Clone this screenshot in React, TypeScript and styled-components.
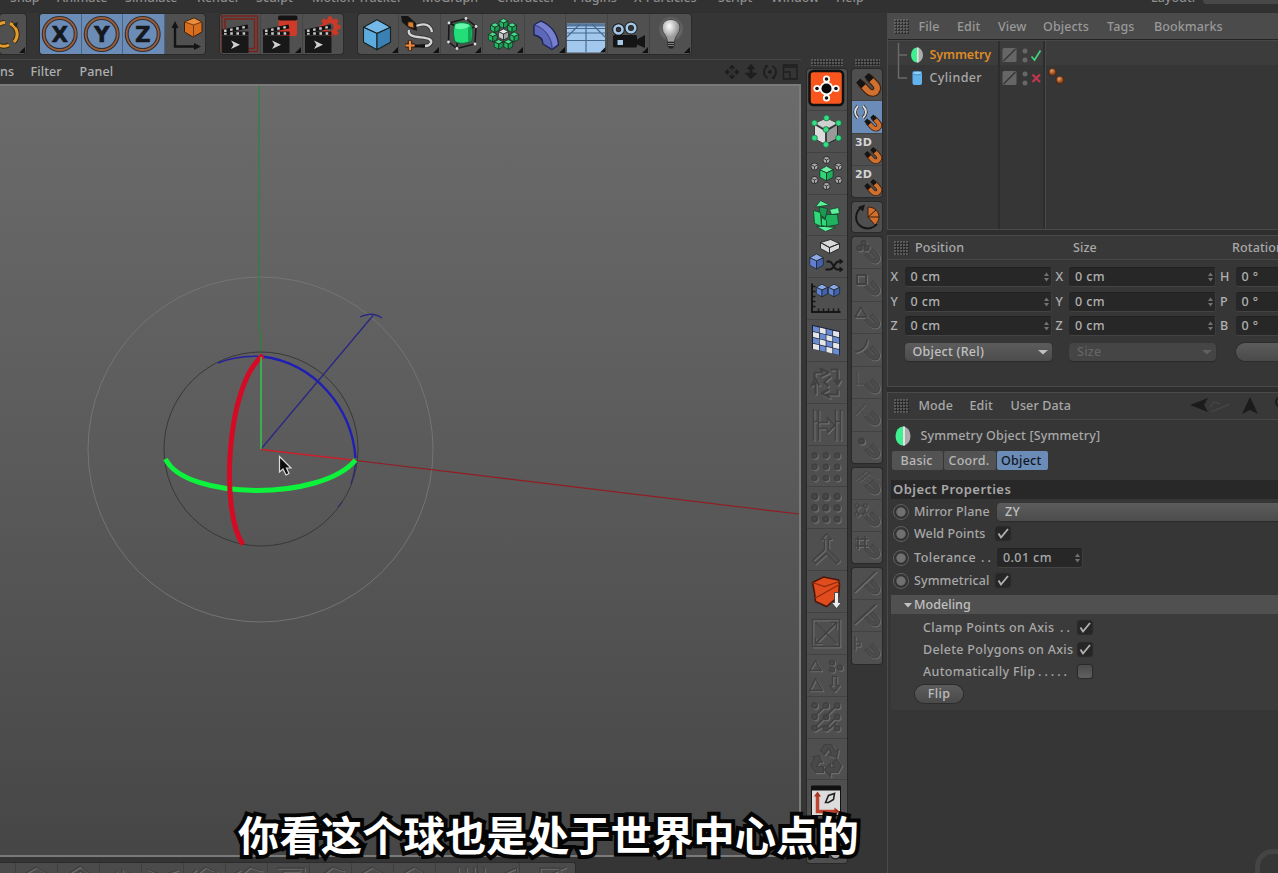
import React from "react";
import styled, { createGlobalStyle } from "styled-components";

const Global = createGlobalStyle`
  html, body { margin: 0; padding: 0; background: #353535; overflow: hidden; }
  * { box-sizing: border-box; }
  svg { display: block; flex: none; }
`;

/* ---------- shell ---------- */
const Shell = styled.div`
  position: relative;
  width: 1278px;
  height: 873px;
  overflow: hidden;
  display: flex;
  flex-direction: column;
  background: #353535;
  color: #b0b0b0;
  font-family: "Noto Sans", "Open Sans", "Noto Sans CJK SC", sans-serif;
  font-size: 12.5px;
  font-weight: 500;
  line-height: 16px;
`;
const MenuBar = styled.div`
  height: 13px;
  flex: none;
  display: flex;
  overflow: hidden;
  background: #313131;
  padding-left: 10px;
  color: #8e8e8e;
`;
const MenuItem = styled.div<{ $w: number }>`
  width: ${(p) => p.$w}px;
  flex: none;
  margin-top: -10px;
  white-space: nowrap;
`;
const LayoutSelect = styled.div`
  flex: 1;
  height: 4px;
  background: #484848;
  border-radius: 0 0 0 4px;
`;
const Body = styled.div`
  flex: 1;
  display: flex;
  min-height: 0;
`;
const LeftSide = styled.div`
  width: 887px;
  flex: none;
  display: flex;
  flex-direction: column;
`;
const Toolbar = styled.div`
  height: 46px;
  flex: none;
  display: flex;
  gap: 14.5px;
  padding-top: 1px;
`;
const ToolGroup = styled.div<{ $w: number }>`
  width: ${(p) => p.$w}px;
  height: 40px;
  display: flex;
  overflow: hidden;
  border-radius: 3px;
  background: #505050;
  box-shadow: 0 0 0 1px #2a2a2a;
`;
const Tool = styled.div<{ $on?: boolean }>`
  flex: 1;
  min-width: 0;
  background: ${(p) => (p.$on ? "#6c8cb8" : "transparent")};
  border-right: 1px solid ${(p) => (p.$on ? "#4c6488" : "#444")};
  &:last-child { border-right: 0; }
`;
const Work = styled.div`
  flex: 1;
  display: flex;
  min-height: 0;
`;
const ViewColumn = styled.div`
  width: 801px;
  flex: none;
  display: flex;
  flex-direction: column;
  border-top: 1px solid #484848;
`;
const ViewMenu = styled.div`
  height: 24px;
  flex: none;
  display: flex;
  align-items: center;
  padding-right: 2px;
  background: #343434;
`;
const ViewMenuItem = styled.div<{ $w: number }>`
  width: ${(p) => p.$w}px;
  white-space: nowrap;
  letter-spacing: 0.1px;
`;
const Grow = styled.div`flex: 1;`;
const Viewport = styled.div`
  height: 773px;
  flex: none;
  overflow: hidden;
  border: 2px solid #7a7a7a;
  border-left: 0;
  background: linear-gradient(#6b6b6b, #666 15%, #5a5a5a 50%, #464646);
`;
const BottomPalette = styled.div`
  height: 20px;
  width: 576px;
  margin-top: 5px;
  border-top: 1px solid #2b2b2b;
  border-right: 1px solid #2b2b2b;
  background: #4b4b4b;
  border-radius: 0 3px 0 0;
  overflow: hidden;
`;
const PaletteColumn = styled.div<{ $w: number; $gap: number }>`
  width: ${(p) => p.$w}px;
  margin-left: ${(p) => p.$gap}px;
  flex: none;
  display: flex;
  flex-direction: column;
  gap: 5px;
`;
const Grip = styled.div<{ $w: number; $h: number }>`
  width: ${(p) => p.$w}px;
  height: ${(p) => p.$h}px;
  flex: none;
  background-image: radial-gradient(circle at 1px 1px, #6e6e6e 0.5px, transparent 1.1px),
    radial-gradient(circle at 2px 2px, #1e1e1e 0.5px, transparent 1.2px);
  background-size: 3px 3px;
`;
const GripRow = styled.div`
  height: 5px;
  display: flex;
  justify-content: center;
`;
const Palette = styled.div<{ $h: number }>`
  height: ${(p) => p.$h}px;
  flex: none;
  display: flex;
  flex-direction: column;
  overflow: hidden;
  border-radius: 3px;
  background: #4f4f4f;
  box-shadow: 0 0 0 1px #292929;
`;
const PaletteCell = styled.div<{ $on?: boolean }>`
  flex: 1;
  min-height: 0;
  display: flex;
  background: ${(p) => (p.$on ? "#6c8cb8" : "transparent")};
  border-bottom: 1px solid #424242;
  &:last-child { border-bottom: 0; }
`;

/* ---------- right side ---------- */
const RightSide = styled.div`
  flex: 1;
  min-width: 0;
  display: flex;
  flex-direction: column;
  background: #2e2e2e;
`;
const Panel = styled.div<{ $h: number; $gap?: number }>`
  height: ${(p) => p.$h}px;
  margin-bottom: ${(p) => p.$gap ?? 0}px;
  flex: none;
  background: #363636;
  border: 1px solid #4a4a4a;
  border-right: 0;
  overflow: hidden;
  display: flex;
  flex-direction: column;
`;
const PanelHead = styled.div<{ $h: number; $raised?: boolean }>`
  height: ${(p) => p.$h}px;
  flex: none;
  display: flex;
  align-items: center;
  padding-left: 5.5px;
  background: ${(p) => (p.$raised ? "#4b4b4b" : "#383838")};
  color: ${(p) => (p.$raised ? "#999" : "#a8a8a8")};
  border-bottom: 1px solid ${(p) => (p.$raised ? "#242424" : "#484848")};
  letter-spacing: 0.1px;
`;
const Cell = styled.div<{ $w: number; $ls?: number }>`
  width: ${(p) => p.$w}px;
  flex: none;
  white-space: nowrap;
  ${(p) => (p.$ls !== undefined ? `letter-spacing: ${p.$ls}px;` : "")}
`;
const Tree = styled.div`
  flex: 1;
  display: flex;
  border-top: 1px solid #484848;
  background:
    linear-gradient(#3c3c3c, #3c3c3c) 0 0 / 100% 24px no-repeat #363636;
`;
const TreeCol = styled.div<{ $w?: number }>`
  width: ${(p) => (p.$w ? p.$w + "px" : "auto")};
  flex: ${(p) => (p.$w ? "none" : "1")};
  padding-top: 2px;
  border-right: ${(p) => (p.$w ? "2px solid #2d2d2d" : "0")};
  &:last-child { border-left: 1px solid #484848; }
`;
const TreeRow = styled.div<{ $hot?: boolean }>`
  height: 23px;
  display: flex;
  align-items: center;
  color: ${(p) => (p.$hot ? "#dd8a28" : "#a8a8a8")};
  font-weight: ${(p) => (p.$hot ? 600 : 500)};
  letter-spacing: ${(p) => (p.$hot ? -0.1 : 0.4)}px;
`;
const CoordRows = styled.div`
  padding: 7px 0 0 2.5px;
  display: flex;
  flex-direction: column;
  gap: 4px;
`;
const CoordRow = styled.div<{ $down?: boolean }>`
  height: 20.5px;
  padding-top: ${(p) => (p.$down ? 3 : 0)}px;
  display: flex;
  align-items: center;
`;
const Field = styled.div<{ $w: number; $h?: number }>`
  width: ${(p) => p.$w}px;
  height: ${(p) => p.$h ?? 20}px;
  flex: none;
  display: flex;
  align-items: center;
  justify-content: space-between;
  padding: 0 1px 0 6px;
  background: #272727;
  border-bottom: 1px solid #434343;
  border-right: 1px solid #3d3d3d;
  border-top: 1px solid #212121;
  border-radius: 3px;
  letter-spacing: 0.4px;
`;
const Dropdown = styled.div<{ $w: number; $dim?: boolean }>`
  width: ${(p) => p.$w}px;
  height: 18px;
  flex: none;
  display: flex;
  align-items: center;
  justify-content: space-between;
  padding: 0 4px 1px 8px;
  border-radius: 4px;
  background: ${(p) => (p.$dim ? "#454545" : "linear-gradient(#5c5c5c, #4c4c4c)")};
  color: ${(p) => (p.$dim ? "#646464" : "#c0c0c0")};
  box-shadow: 0 1px 1px #2a2a2a;
  letter-spacing: 0.25px;
`;
const Spacer = styled.div<{ $w: number }>`
  width: ${(p) => p.$w}px;
  flex: none;
`;
const Pill = styled.div<{ $w: number; $h: number }>`
  width: ${(p) => p.$w}px;
  height: ${(p) => p.$h}px;
  flex: none;
  display: flex;
  align-items: center;
  justify-content: center;
  border-radius: 10px;
  background: linear-gradient(#5c5c5c, #4a4a4a);
  color: #bdbdbd;
  box-shadow: 0 0 0 1px #2c2c2c;
  letter-spacing: 0.4px;
`;
const ObjectTitle = styled.div`
  height: 31px;
  flex: none;
  display: flex;
  align-items: center;
  padding-left: 6px;
  color: #a8a8a8;
  letter-spacing: 0.15px;
`;
const Tabs = styled.div`
  height: 20px;
  flex: none;
  display: flex;
  gap: 1px;
  padding-left: 4px;
`;
const Tab = styled.div<{ $on?: boolean }>`
  width: 51.3px;
  height: 19px;
  display: flex;
  align-items: center;
  justify-content: center;
  padding-right: 2px;
  border-radius: 2px;
  background: ${(p) => (p.$on ? "#6c8cb8" : "#535353")};
  color: ${(p) => (p.$on ? "#11161f" : "#b8b8b8")};
  letter-spacing: 0.25px;
`;
const SectionTitle = styled.div`
  height: 19px;
  margin: 9px 0 0 3px;
  padding: 0 0 1px 2px;
  flex: none;
  display: flex;
  align-items: center;
  background: #282828;
  color: #a8a8a8;
  font-size: 13px;
  font-weight: 600;
  letter-spacing: 0.45px;
`;
const PropRow = styled.div<{ $h: number; $indent?: boolean }>`
  height: ${(p) => p.$h}px;
  flex: none;
  display: flex;
  align-items: center;
  padding-left: ${(p) => (p.$indent ? 35 : 5)}px;
  color: #a8a8a8;
  letter-spacing: ${(p) => (p.$indent ? 0.32 : 0.1)}px;
`;
const Fold = styled.div`
  height: 19px;
  margin: 5px 0 0 3px;
  flex: none;
  display: flex;
  align-items: center;
  padding-left: 12px;
  background: #505050;
  color: #c0c0c0;
  letter-spacing: 0.05px;
`;
const FoldBody = styled.div`
  margin-left: 3px;
  padding: 3px 0 0 0;
  height: 96px;
  flex: none;
  background: #3b3b3b;
  & > * { margin-left: -3px; }
`;
const Radio = styled.div`
  width: 16px;
  height: 16px;
  margin-right: 5px;
  flex: none;
  border-radius: 50%;
  border: 1.5px solid #606060;
  background: radial-gradient(circle, #707070 0 4px, #333 5.2px);
`;
const CheckBox = styled.div<{ $on?: boolean }>`
  width: 13.5px;
  height: 13.5px;
  margin-bottom: 1.5px;
  flex: none;
  border-radius: 3px;
  background: ${(p) => (p.$on ? "#262626" : "linear-gradient(#4b4b4b, #606060)")};
  box-shadow: 0 0 1px 0.5px #2a2a2a;
`;
const Subtitle = styled.div`
  position: absolute;
  left: 238px;
  top: 802.5px;
  white-space: nowrap;
  font: 700 41.4px/60px "Noto Sans CJK SC", sans-serif;
  color: #fff;
  -webkit-text-stroke: 8px #050505;
  paint-order: stroke fill;
`;
const CornerMark = styled.div`
  position: absolute;
  left: 1255px;
  top: 849px;
  width: 46px;
  height: 46px;
  border: 5px solid #444;
  border-radius: 18px;
`;

/* ---------- icon helpers ---------- */
function Cube({ x, y, r, c }: { x: number; y: number; r: number; c: [string, string, string] }) {
  const h = r * 0.5, w = r * 0.9;
  return (
    <g stroke="#15221f" strokeWidth={r > 8 ? 1.1 : 0.7} strokeLinejoin="round">
      <path d={`M${x} ${y - r}L${x + w} ${y - h}L${x} ${y - r * 0.08}L${x - w} ${y - h}Z`} fill={c[0]} />
      <path d={`M${x - w} ${y - h}L${x} ${y - r * 0.08}V${y + r}L${x - w} ${y + h}Z`} fill={c[1]} />
      <path d={`M${x + w} ${y - h}L${x} ${y - r * 0.08}V${y + r}L${x + w} ${y + h}Z`} fill={c[2]} />
    </g>
  );
}
const GREEN: [string, string, string] = ["#6ff0a4", "#2fd878", "#1fae5c"];
const BLUE: [string, string, string] = ["#8fa9e6", "#6280cf", "#4560ad"];
const WHITE: [string, string, string] = ["#e8e8e8", "#c8c8c8", "#a0a0a0"];

/* engraved look of a disabled command */
function Emboss({ d, w = 1.5, fill }: { d: string; w?: number; fill?: boolean }) {
  return (
    <g strokeWidth={w} strokeLinejoin="round" fill="none">
      <path d={d} stroke="#6c6c6c" transform="translate(1.2 1.2)" />
      <path d={d} stroke="#404040" fill={fill ? "#494949" : "none"} />
    </g>
  );
}
const Corner = () => <path d="M40 33v6h-6z" fill="#111" />;

function Ring({ label }: { label: string }) {
  return (
    <svg width="40" height="40" viewBox="0 0 40 40">
      <circle cx="19.7" cy="20" r="16" fill="none" stroke="#303030" strokeWidth="4" />
      <circle cx="19.7" cy="20" r="16" fill="none" stroke="#9c5d3a" strokeWidth="1.8" />
      <text x="19.7" y="27.800" textAnchor="middle" fontFamily="DejaVu Sans" fontWeight="700" fontSize="21.500" fill="#15181d" stroke="#15181d" strokeWidth=".5">{label}</text>
    </svg>
  );
}
function Clapper() {
  return (
    <g>
      <rect x="2" y="22" width="26.500" height="17" fill="#181818" />
      <path d="M2 19.500h26.500" stroke="#131313" strokeWidth="4" />
      <path d="M4 19.500h24" stroke="#c8c8c8" strokeWidth="2.400" strokeDasharray="2.600 3.600" />
      <path d="M2 17.500L28 12.500" stroke="#131313" strokeWidth="4" />
      <path d="M4 17L28 12.500" stroke="#c8c8c8" strokeWidth="2.400" strokeDasharray="2.600 3.600" />
      <path d="M11 26.500L20 30.800L11 35L13.500 30.800Z" fill="#d0d0d0" />
    </g>
  );
}
const gear = Array.from({ length: 8 }, (_, i) => i * 45);
const petals = Array.from({ length: 7 }, (_, i) => {
  const a = (i * 2 * Math.PI) / 7 - Math.PI / 2;
  return [20.5 + 11 * Math.cos(a), 20.5 + 11 * Math.sin(a)];
});

const primitives = [
  <svg key="cube" width="41" height="40"><Cube x={19} y={20.7} r={15} c={["#74b8e8", "#5cacdf", "#3a80b5"]} /><Corner /></svg>,
  <svg key="spline" width="41" height="40">
    <path d="M17 12C27 8 32 12 33 18M10 16C7 27 35 20 32 29C31 32 27 32 22 32" fill="none" stroke="#333" strokeWidth="4" />
    <path d="M17 12C27 8 32 12 33 18M10 16C7 27 35 20 32 29C31 31 29 32 26 32" fill="none" stroke="#d2d2d2" strokeWidth="2.400" />
    <path d="M16 32h10" stroke="#111" strokeWidth="3" />
    <path d="M2 2L9 2L17 9L18 17L10 14L3 8Z" fill="#151515" />
    <path d="M9 8L14 8L15 14L9 12.500Z" fill="#d9822f" stroke="#4a2a12" strokeWidth=".8" />
    <path d="M11 26.500v10M6 31.500h10" stroke="#3a2313" strokeWidth="4.400" /><path d="M11 27v9M6.500 31.500h9" stroke="#ee8b3e" strokeWidth="2.200" /><Corner />
  </svg>,
  <svg key="subdiv" width="41" height="40">
    <path d="M8 9L25 4.500L35 12.500L34 30L16 34.500L7.500 28ZM8 9L17 13M35 12.500L30 14M16 34.500V29" fill="none" stroke="#161616" strokeWidth="1.500" />
    <path d="M14 10C18 8 25 8 29 10.500C32 14 32 23 30 27C25 30 18 30 14 27.500C12 22 12 14 14 10Z" fill="#22dd78" stroke="#0c6b36" />
    <path d="M14.500 10.500C18 9 24 9 28 11C27 15 18 16 14 14Z" fill="#66f5a9" /><path d="M27 14L30.500 12V26.500L27 28Z" fill="#13a355" />
    {[[8, 9], [25, 4.5], [35, 12.5], [34, 30], [16, 34.5], [7.5, 28]].map(([x, y]) => <circle key={x} cx={x} cy={y} r="1.400" fill="#ddd" />)}<Corner />
  </svg>,
  <svg key="array" width="41" height="40">
    {petals.map(([x, y], i) => <g key={i}><circle cx={x} cy={y} r="4.600" fill="#158946" /><Cube x={x} y={y} r={4.9} c={["#4fd98a", "#26b763", "#1d9a51"]} /></g>)}
    <Cube x={20.5} y={20.5} r={5.6} c={WHITE} /><Corner />
  </svg>,
  <svg key="bend" width="41" height="40">
    <path d="M9 11L16 7C26 11 33 20 33.500 31L27 35.500L18 30C18 25 14 22 9 21Z" fill="#5e68b8" stroke="#1b2152" strokeWidth="1.300" />
    <path d="M10.500 10.500L16 8C25 12 32 20 32.500 30L28 33C27 23 20 14 10.500 10.500Z" fill="#7680cf" /><path d="M9 11C20 14 27 24 27 35" fill="none" stroke="#39428c" strokeWidth="1" /><Corner />
  </svg>,
  <svg key="floor" width="41" height="40">
    <rect x="1" y="9.500" width="38" height="29" fill="#a3c8ee" /><rect x="1" y="9.500" width="38" height="3" fill="#55779c" />
    <path d="M1 14.500H39M1 19H39M1 26.500H39M20 10V38M14 10L1 23M26 10L39 23" stroke="#49698b" strokeWidth="1.200" />
    <path d="M34 38.500L39.500 33V38.500Z" fill="#111" />
  </svg>,
  <svg key="camera" width="41" height="40">
    <rect x="5" y="21" width="24" height="12.500" rx="1.500" fill="#151515" /><path d="M28 26L37 21V34L28 30Z" fill="#151515" />
    <circle cx="10.500" cy="15.500" r="4.200" fill="#333" stroke="#151515" strokeWidth="4" /><circle cx="10.500" cy="15.500" r="4" fill="none" stroke="#a3c8e8" strokeWidth="2.600" />
    <circle cx="23" cy="14" r="4.500" fill="#333" stroke="#151515" strokeWidth="4" /><circle cx="23" cy="14" r="4.300" fill="none" stroke="#a3c8e8" strokeWidth="2.600" />
    <rect x="9.500" y="26" width="5.500" height="5" fill="#a3c8e8" /><Corner />
  </svg>,
  <svg key="light" width="41" height="40">
    <defs>
      <radialGradient id="bulb" cx=".4" cy=".3"><stop offset="0" stopColor="#fff" /><stop offset="1" stopColor="#9a9a9a" /></radialGradient>
      <radialGradient id="glow"><stop offset=".6" stopColor="#777" /><stop offset="1" stopColor="#505050" /></radialGradient>
    </defs>
    <circle cx="21" cy="15" r="13" fill="url(#glow)" /><path d="M21 5.500C14 5.500 11 11 12.500 16C13.500 20 17 22 17.500 28H24.500C25 22 28.500 20 29.500 16C31 11 28 5.500 21 5.500Z" fill="url(#bulb)" stroke="#333" strokeWidth=".8" />
    <path d="M17.500 28H24.500V32L22.500 34.500H19.500L17.500 32Z" fill="#222" /><path d="M18 29.500h6M18 31.500h6" stroke="#999" strokeWidth=".8" /><Corner />
  </svg>,
];

/* ---------- side palettes ---------- */
const dots = (x0: number, y0: number, s: number, n: number, r: number) => {
  let d = "";
  for (let i = 0; i < n; i++) for (let j = 0; j < n; j++) d += `M${x0 + i * s - r} ${y0 + j * s}a${r} ${r} 0 1 0 ${2 * r} 0a${r} ${r} 0 1 0 ${-2 * r} 0`;
  return d;
};
const checker: [number, number][] = [];
for (let i = 0; i < 4; i++) for (let j = 0; j < 4; j++) checker.push([i, j]);

const moduleIcons = [
  <g key="0"><rect x="3" y="2.500" width="33.500" height="34" rx="4" fill="#f8561c" stroke="#111" strokeWidth="2.500" />
    <path d="M20 9V31M9 20H31" stroke="#fff" strokeWidth="4" /><circle cx="20" cy="20" r="6.800" fill="#fff" />
    {[[20, 10.5], [20, 29.5], [10.5, 20], [29.5, 20]].map(([x, y]) => <g key={`${x}-${y}`}><circle cx={x} cy={y} r="3.600" fill="#fff" /><circle cx={x} cy={y} r="1.800" fill="#111" /></g>)}
    <circle cx="20" cy="20" r="5" fill="#050505" /></g>,
  <g key="1"><path d="M20 8.500L31 13V28L19.500 34L8.500 28V13Z" fill="#999" stroke="#222" /><path d="M8.500 13L19.500 19V34L8.500 28Z" fill="#dcdcdc" /><path d="M20 8L31 13L19.500 18L8.500 13Z" fill="#d0d0d0" /><path d="M19 20L9 14M20 20L30 14M19.500 20V34" stroke="#333" strokeWidth="1.800" />
    {[[20, 7.5], [8, 12.5], [32, 12.5], [19.5, 19], [8, 27.5], [32, 27.5], [19.5, 34]].map(([x, y], i) => <circle key={i} cx={x} cy={y} r="2.900" fill="#35dc84" stroke="#1c5f3d" strokeWidth=".7" />)}</g>,
  <g key="2"><Cube x={20} y={21} r={7.4} c={GREEN} />
    {[[20, 7.5], [8, 14], [32, 14], [8, 27.5], [32, 27.5], [20, 33.5]].map(([x, y], i) => <g key={i}><circle cx={x} cy={y} r="3.800" fill="#2b2b2b" /><circle cx={x} cy={y} r="3" fill="#a8a8a8" /><path d={`M${x - 2.4} ${y - 1.2}L${x} ${y}L${x + 2.4} ${y - 1.2}M${x} ${y}V${y + 3}`} fill="none" stroke="#333" strokeWidth=".9" /></g>)}</g>,
  <g key="3" fill="#2fd878" stroke="#0e4526" strokeWidth=".8"><path d="M14 6L23 10.500L9 12.500Z" fill="#5df09a" /><path d="M13 12.500L21 14L19 24L13 20Z" fill="#1a9a50" /><path d="M23 15L32 13L33 19L25 20Z" fill="#5df09a" /><path d="M7 16L14 18L15 32L8 29Z" /><path d="M20 20L31 20L32 30L21 32L18 27Z" fill="#20b35f" /><path d="M10 32L18 32L29 33L19 37Z" fill="#5df09a" /><path d="M15 23L20 26L20 32L15 31Z" /></g>,
  <g key="4"><path d="M14 7L24 4L33 8L23 12ZM14 7L23 12V18L14 13ZM33 8L23 12V18L33 13Z" fill="#d8d8d8" stroke="#222" strokeWidth=".9" /><Cube x={10} y={26} r={7.500} c={BLUE} />
    <path d="M19 34H23C28 34 28 26 32 26H35M20 26H23C27 27 27 34 31 34H35" fill="none" stroke="#161616" strokeWidth="2" /><path d="M33 23L37 26L33 29ZM33 31L37 34L33 37Z" fill="#161616" /></g>,
  <g key="5"><path d="M5.500 6V34.500H34" fill="none" stroke="#161616" strokeWidth="2" /><path d="M5.500 9H9M5.500 14H9M5.500 19H9M5.500 24H9M5.500 29H9M12 34V31M17 34V31M22 34V31M27 34V31M32 34V31" stroke="#161616" strokeWidth="1.500" /><Cube x={15.500} y={13} r={6.300} c={BLUE} /><Cube x={27.500} y={13} r={6.300} c={BLUE} /></g>,
  <g key="6" transform="translate(6.500 6.500) skewY(13)"><rect width="28" height="24" fill="#18203a" x="-1" y="-1" />{checker.map(([i, j]) => <rect key={`${i}${j}`} x={i * 6.7} y={j * 5.9} width="6" height="5.200" fill={(i + j) % 2 ? "#e6e6e6" : "#6b8bd0"} />)}</g>,
  <g key="7"><Emboss d="M8 11H16L14 7L22 11L14 15M8 11V18M24 8H31V22M28 18L31 23L34 18M31 28V33H20L23 36L15 32L22 28M9 33V21L5 24L9 17L13 24M17 20L22 25M24 15L18 20" w={2.200} /></g>,
  <g key="8"><Emboss d="M7 6V37M12 6V37M29 6V37M34 6V37M7 18H12M29 18H34M12 19H21V14L28 22L21 29V25H12Z" w={1.600} /></g>,
  <g key="9"><Emboss d={dots(8, 10, 11.3, 3, 2.4)} fill w={1.600} /></g>,
  <g key="10"><Emboss d={dots(8, 10, 11.3, 3, 2.6)} fill w={2.200} /></g>,
  <g key="11"><Emboss d="M18 21V11H15L20 5L25 11H22V21L33 32L30 35L20 25L9 35L6 32Z" w={1.200} /></g>,
  <g key="12"><path d="M6 12L17 6.500L32 9.500L33 14L32 26L20 36L9 31L8 22Z" fill="#e04c1d" stroke="#4b1708" strokeWidth="1.600" /><path d="M6 12L18 16L33 11M33 14L8 28" stroke="#8f2a0d" fill="none" strokeWidth="1.300" /><path d="M28 22H32V32H35L30 38L25 32H28Z" fill="#eee" stroke="#333" strokeWidth=".8" /></g>,
  <g key="13"><Emboss d="M6 7H33V34H6ZM9 10L30 31M30 10L9 31M9 25V31H15M24 10H30V16" w={1.500} /></g>,
  <g key="14"><Emboss d="M9 6L15 16H3ZM9 24L16 36H3ZM26 22V31H23L28 37L33 31H30V22Z" w={1.300} /><Emboss d="M23 8a2.500 2.500 0 1 0 5 0a2.500 2.500 0 1 0 -5 0M31 13a2.500 2.500 0 1 0 5 0a2.500 2.500 0 1 0 -5 0M23 15a2.500 2.500 0 1 0 5 0a2.500 2.500 0 1 0 -5 0" w={1.200} fill /></g>,
  <g key="15"><Emboss d={dots(8, 9, 11.3, 3, 2.6) + "M10 18L17 11M10 29L28 11M21 29L28 22M11 33L17 29M22 33L30 26"} w={1.500} fill /></g>,
  <g key="16"><Emboss d="M14 12L18 6H25L29 13L32 11L30 19L22 17L25 15L22 10L18 16ZM6 18L13 17L16 24L13 23L10 28H17V34H9L4 27L8 20ZM30 20L35 27L31 34H24V38L18 31L24 25V29H28L26 24Z" w={1.200} fill /></g>,
  <g key="17"><rect x="5" y="7" width="29" height="29" fill="#dcdcdc" stroke="#111" strokeWidth="1" /><rect x="5" y="6" width="29" height="5" fill="#111" /><path d="M11 15V32H31" fill="none" stroke="#bf4430" strokeWidth="3.500" /><path d="M7.500 17L11 12L14.500 17ZM28 28L33 32L28 35Z" fill="#a8351f" /><path d="M19 23L22 16L28 14L27 20L22 23Z" fill="none" stroke="#222" strokeWidth="1.600" /></g>,
  <g key="18"><circle cx="29" cy="32" r="5.500" fill="#a5a5a5" stroke="#222" strokeWidth="1.500" /></g>,
];

const MAGNET_OUTLINE = "M-8 -1L-2 5.500C2 9.500 7 8.500 8.500 5.500C10.500 2 8.500 -2 6 -4L1.500 -8.500L-2 -5L4 1C6 4 3.500 5 1 3L-5 -3Z";
function Magnet({ x, y, s = 1, off }: { x: number; y: number; s?: number; off?: boolean }) {
  const d = "M-7 -2L-1 4.500C1.500 7 5 6.500 6 4.500C7.500 2.500 6.500 0 4.500 -2L-.5 -7";
  return (
    <g transform={`translate(${x} ${y}) scale(${s})`} fill="none">
      {off ? (
        <>
          <path d={MAGNET_OUTLINE} stroke="#6b6b6b" strokeWidth="1.500" transform="translate(1.200 1.200)" />
          <path d={MAGNET_OUTLINE} stroke="#454545" fill="#4c4c4c" strokeWidth="1.300" />
        </>
      ) : (
        <>
          <path d={d} stroke="#40220f" strokeWidth="6.500" /><path d={d} stroke="#d0702f" strokeWidth="4.600" />
          <path d="M-9 -4L-4.500 .5M-2 -8.800L2 -4.500" stroke="#141414" strokeWidth="5" />
        </>
      )}
    </g>
  );
}
const snapGroups: { h: number; items: { on?: boolean; art: React.ReactNode }[] }[] = [
  { h: 128, items: [
    { art: <Magnet x={17} y={16.5} s={1.2} /> },
    { on: true, art: <><path d="M6 5C2 9 2 13 6 17M11 5C15 9 15 13 11 17" fill="none" stroke="#333" strokeWidth="3.400" /><path d="M6 5C2 9 2 13 6 17M11 5C15 9 15 13 11 17" fill="none" stroke="#dcdcdc" strokeWidth="1.800" /><Magnet x={21.500} y={22.500} s={0.86} /></> },
    { art: <><text x="3" y="12" fontFamily="DejaVu Sans" fontWeight="700" fontSize="11" fill="#d4d4d4">3D</text><Magnet x={21.500} y={22} s={0.86} /></> },
    { art: <><text x="3" y="12" fontFamily="DejaVu Sans" fontWeight="700" fontSize="11" fill="#d4d4d4">2D</text><Magnet x={21.500} y={22} s={0.86} /></> },
  ] },
  { h: 30, items: [{ art: <><path d="M10 5C2 10 2 22 11 25.500C16 27.500 22 26 25 22" fill="none" stroke="#161616" strokeWidth="2" /><path d="M6 5L13 2.500L11 9.500Z" fill="#161616" /><path d="M16 15V5C22 5 27 9 27 15C27 18 25 21 23 23Z" fill="#d0702f" stroke="#3b1d0b" /><path d="M16 15L24 8M16 15H27" stroke="#3b1d0b" /></> }] },
  { h: 226, items: [
    { art: <Emboss d={"M5 11a2.500 2.500 0 1 0 5 0a2.500 2.500 0 1 0 -5 0M9 6a2.500 2.500 0 1 0 5 0a2.500 2.500 0 1 0 -5 0M12 11a2.500 2.500 0 1 0 5 0a2.500 2.500 0 1 0 -5 0"} fill /> },
    { art: <Emboss d="M5 6H14V15H5Z" w={2} /> },
    { art: <Emboss d="M9 5L15 15H3Z" /> },
    { art: <Emboss d="M3 18C10 17 15 12 15 5" w={1.6} /> },
    { art: <Emboss d="M5 4V18M3 17H14" w={0.600} /> },
    { art: <Emboss d="M3 5L13 16M13 5L3 16" w={0.800} /> },
    { art: <Emboss d="M7 9a2.500 2.500 0 1 0 5 0a2.500 2.500 0 1 0 -5 0" w={2} fill /> },
  ] },
  { h: 95, items: [
    { art: <Emboss d="M3 12L14 3L27 11M7 9L18 16M10 6L22 14M6 14L18 5" w={0.6} /> },
    { art: <Emboss d={dots(5, 6, 8, 2, 2.2) + "M5 6H13V14H5Z"} w={1} /> },
    { art: <Emboss d="M3 7H16M3 14H16M6 4V17M13 4V17" w={1.600} /> },
  ] },
  { h: 95.5, items: [
    { art: <Emboss d="M2 24L24 3" w={1.7} /> },
    { art: <Emboss d="M2 24L24 4" w={1.7} /> },
    { art: <Emboss d="M3 4V18M8 14V10H4M4 14H8" w={1.200} /> },
  ] },
];

const menuItems: [string, number][] = [
  ["Snap", 47], ["Animate", 68], ["Simulate", 72], ["Render", 59], ["Sculpt", 56], ["Motion Tracker", 110], ["MoGraph", 75],
  ["Character", 76], ["Plugins", 61], ["X-Particles", 84], ["Script", 53], ["Window", 65], ["Help", 315], ["Layout:", 52],
];

const Spin = () => (
  <svg width="7" height="12"><path d="M3.500 1.500L6 5H1ZM3.500 10.500L6 7H1Z" fill="#727272" /></svg>
);
const Caret = ({ c }: { c: string }) => <svg width="10" height="6"><path d="M0 1H10L5 5.500Z" fill={c} /></svg>;
const HalfBall = ({ w, h }: { w: number; h: number }) => (
  <svg width={w} height={h} viewBox="0 0 16 20">
    <path d="M8 .5A7.500 9.500 0 0 0 8 19.500Z" fill="#3ef08e" /><path d="M8 .5A7.500 9.500 0 0 1 8 19.500Z" fill="#acacac" /><path d="M8 .5h2v19H8z" fill="#e4e4e4" />
  </svg>
);
const RowFlags = ({ ok }: { ok: boolean }) => (
  <svg width="43" height="18">
    <rect x="2.500" y="2" width="14" height="14" rx="1.500" fill="#666" /><path d="M3.500 15L15.500 3" stroke="#333" strokeWidth="1.300" />
    <circle cx="25" cy="5" r="2.500" fill="#676767" /><circle cx="25" cy="14" r="2.500" fill="#676767" />
    {ok ? <path d="M31.500 10.500L34.500 14L40.500 4.500" fill="none" stroke="#45cf7c" strokeWidth="1.700" /> : <path d="M32.500 5.500L40 13M40 5.500L32.500 13" stroke="#c2354d" strokeWidth="2.200" />}
  </svg>
);
const Tick = ({ on = true }: { on?: boolean }) => (
  <CheckBox $on={on}>{on && <svg width="14" height="14"><path d="M2.500 6.500L5 10.500L12 2" fill="none" stroke="#b0b0b0" strokeWidth="1.900" /></svg>}</CheckBox>
);

const stripArt = ["M22 12L36 4L50 12", "M66 12L80 3L92 12M74 12L80 8L87 12", "M116 12V8M122 12V6M130 12V9", "M147 6L162 12L178 7", "M196 12L205 4L217 9L212 12M190 12L196 6",
  "M240 12L250 4L262 8M232 12L240 7", "M277 5H304V12M283 12V8H300", "M322 12L332 4L344 8", "M358 12L372 4L386 12", "M400 12L414 4L428 12", "M458 12V4M466 12V4M474 12V4M484 12V4", "M500 12L516 5L518 12", "M540 12V5H560V12M548 12L566 4"];

export default function App() {
  return (
    <Shell>
      <Global />
      <MenuBar>
        {menuItems.map(([t, w]) => <MenuItem key={t} $w={w}>{t}</MenuItem>)}
        <LayoutSelect />
      </MenuBar>
      <Body>
        <LeftSide>
          <Toolbar>
            <ToolGroup $w={25.5}>
              <Tool><svg width="26" height="40"><g fill="none"><path d="M10 9.500A11.500 11.500 0 0 1 14 28M-4 29A11.500 11.500 0 0 0 9 31M-3 12A12 12 0 0 1 5 8.500" stroke="#3a2a0e" strokeWidth="5" /><path d="M10 9.500A11.500 11.500 0 0 1 14 28M-4 29A11.500 11.500 0 0 0 9 31M-3 12A12 12 0 0 1 5 8.500" stroke="#e29c2e" strokeWidth="3" /></g><path d="M13 10L18 8L16.500 14Z" fill="#222" /><path d="M25 33v6h-6z" fill="#111" /></svg></Tool>
            </ToolGroup>
            <ToolGroup $w={165}>
              <Tool $on><Ring label="X" /></Tool>
              <Tool $on><Ring label="Y" /></Tool>
              <Tool $on><Ring label="Z" /></Tool>
              <Tool><svg width="41" height="40">
                <path d="M10 12V32.500H30" fill="none" stroke="#141414" strokeWidth="2.400" /><path d="M6.500 14L10 7L13.500 14ZM29 29L36 32.500L29 36Z" fill="#141414" />
                <path d="M19.500 8L29 4L37 8V18L28 23L19.500 18Z" fill="#d96f1e" stroke="#3c1f08" /><path d="M20.500 8L29 4.500L36 8L28.500 10.500Z" fill="#e88c40" /><path d="M19.500 8L28.500 11L37 8M28.500 11V23" stroke="#7a3c0d" fill="none" />
              </svg></Tool>
            </ToolGroup>
            <ToolGroup $w={123.5}>
              <Tool><svg width="41" height="40"><path d="M2 2H37.500V37.500H2ZM5 5H34.500V34.500H5Z" fill="none" stroke="#7d2019" strokeWidth="1.500" /><Clapper /></svg></Tool>
              <Tool><svg width="41" height="40"><rect x="17.500" y="2" width="18.500" height="20" rx="2" fill="#cf3b28" /><rect x="17" y="1.500" width="19.500" height="5" rx="2" fill="#141414" /><Clapper /><Corner /></svg></Tool>
              <Tool><svg width="41" height="40"><g transform="translate(27 13)">{gear.map((a) => <rect key={a} x="-2.200" y="-10.500" width="4.400" height="5" fill="#c93a28" transform={`rotate(${a})`} />)}<circle r="6" fill="none" stroke="#c93a28" strokeWidth="4.500" /></g><Clapper /></svg></Tool>
            </ToolGroup>
            <ToolGroup $w={333}>{primitives.map((p, i) => <Tool key={i}>{p}</Tool>)}</ToolGroup>
          </Toolbar>
          <Work>
            <ViewColumn>
              <ViewMenu>
                <ViewMenuItem $w={30.5}>ns</ViewMenuItem>
                <ViewMenuItem $w={49}>Filter</ViewMenuItem>
                <ViewMenuItem $w={60}>Panel</ViewMenuItem>
                <Grow />
                <svg width="76" height="18" viewBox="0 0 76 18" fill="#1e1e1e" stroke="#1e1e1e">
                  <path d="M9 2L11.500 5H6.500ZM9 16L11.500 13H6.500ZM2 9L5 6.500V11.500ZM16 9L13 6.500V11.500ZM9 5V7.500M9 10.500V13M5 9H7.500M10.500 9H13" strokeWidth="1" />
                  <path d="M28 1L32 6H24ZM28 16L34 10H22Z" strokeWidth=".5" /><path d="M28 5V12" strokeWidth="3" />
                  <path d="M45 15A6.500 6.500 0 0 1 45 3M49 3A6.500 6.500 0 0 1 49 15M45 3H42M49 15H52" fill="none" strokeWidth="1.800" /><circle cx="47" cy="9" r="1.400" />
                  <path d="M60.500 2H74V16H60.500ZM60.500 9H67V16M60.500 4H74" fill="none" strokeWidth="1.300" />
                </svg>
              </ViewMenu>
              <Viewport>
                <svg width="799" height="769" viewBox="0 86 799 769" fill="none">
                  <circle cx="260.500" cy="449.500" r="172.500" stroke="#747474" />
                  <path d="M259 86V330L260.500 334V352" stroke="#2d8239" strokeWidth="1.200" />
                  <circle cx="261" cy="449" r="97" stroke="#383838" />
                  <path d="M218 363Q238 355 262 356.500" stroke="#2520a0" strokeWidth="1.700" />
                  <path d="M262 356.500C315 363 352 408 355.500 458" stroke="#201fb5" strokeWidth="2.400" />
                  <path d="M355.500 461Q355 472 351 484M342 502L338 507" stroke="#2c2a76" strokeWidth="1.200" />
                  <path d="M261 449L373 315.500M360 317Q372 311 382 318" stroke="#2a2783" strokeWidth="1.300" />
                  <path d="M261 449.500L356 460.500" stroke="#cb1f2b" strokeWidth="1.300" /><path d="M356 460.500L799 514" stroke="#941b22" strokeWidth="1.200" />
                  <path d="M165.500 459C186 500.500 322 501 355.500 460" stroke="#0df33c" strokeWidth="5" />
                  <path d="M263 355.500C226 384 220 512 243 544.500" stroke="#d50b25" strokeWidth="5" />
                  <path d="M261 357V449" stroke="#35c94a" strokeWidth="1.500" />
                  <path d="M279.500 456.500V472L283 469L286 475L289 473.500L286.500 468H291Z" fill="#0d0d0d" stroke="#dcdcdc" strokeWidth="1.200" />
                </svg>
              </Viewport>
              <BottomPalette>
                <svg width="576" height="12">
                  {stripArt.map((d, i) => <g key={i}><path d={`M${15.5 + i * 42} 0V12`} stroke="#3f3f3f" /><Emboss d={d} w={1.3} /></g>)}
                </svg>
              </BottomPalette>
            </ViewColumn>
            <PaletteColumn $w={39.5} $gap={6}>
              <GripRow><Grip $w={32} $h={7} /></GripRow>
              <Palette $h={794}>
                {moduleIcons.map((m, i) => <PaletteCell key={i}><svg width="39.5" height="41" viewBox="0.500 0.500 39.500 41">{m}</svg></PaletteCell>)}
              </Palette>
            </PaletteColumn>
            <PaletteColumn $w={30} $gap={5.5}>
              <GripRow><Grip $w={25} $h={7} /></GripRow>
              {snapGroups.map((g, gi) => (
                <Palette key={gi} $h={g.h}>
                  {g.items.map((it, i) => (
                    <PaletteCell key={i} $on={it.on}>
                      <svg width="30" height="32">{it.art}{gi > 1 && <Magnet x={19.5} y={19} s={0.85} off />}</svg>
                    </PaletteCell>
                  ))}
                </Palette>
              ))}
            </PaletteColumn>
          </Work>
        </LeftSide>
        <RightSide>
          <Panel $h={217} $gap={5}>
            <PanelHead $h={26} $raised>
              <Cell $w={25}><Grip $w={15} $h={15} /></Cell>
              <Cell $w={38.5}>File</Cell><Cell $w={41}>Edit</Cell><Cell $w={45}>View</Cell><Cell $w={64}>Objects</Cell><Cell $w={47}>Tags</Cell><Cell $w={80}>Bookmarks</Cell>
            </PanelHead>
            <Tree>
              <TreeCol $w={112}>
                <TreeRow $hot>
                  <Cell $w={22}><svg width="22" height="23"><path d="M10.500 0V23M10.500 12H19" stroke="#6a6a6a" strokeWidth="1.400" /></svg></Cell>
                  <Cell $w={19.5}><HalfBall w={14} h={16} /></Cell><Cell $w={68}>Symmetry</Cell>
                </TreeRow>
                <TreeRow>
                  <Cell $w={22}><svg width="22" height="23"><path d="M10.500 0V12H19" fill="none" stroke="#6a6a6a" strokeWidth="1.400" /></svg></Cell>
                  <Cell $w={19.5}><svg width="14" height="16"><rect x="2.500" y="1" width="9.500" height="14" rx="2" fill="#62b2ee" /><ellipse cx="7.200" cy="3" rx="4.600" ry="1.800" fill="#8fd0fa" stroke="#2c6b9c" strokeWidth=".6" /></svg></Cell><Cell $w={68}>Cylinder</Cell>
                </TreeRow>
              </TreeCol>
              <TreeCol $w={45}><TreeRow><RowFlags ok /></TreeRow><TreeRow><RowFlags ok={false} /></TreeRow></TreeCol>
              <TreeCol>
                <TreeRow />
                <TreeRow><svg width="24" height="22"><defs><radialGradient id="bead" cx=".4" cy=".35"><stop offset="0" stopColor="#e89c60" /><stop offset="1" stopColor="#8c4216" /></radialGradient></defs><circle cx="6.500" cy="5" r="3.700" fill="url(#bead)" stroke="#2a1a10" strokeWidth=".6" /><circle cx="14" cy="13" r="3.900" fill="url(#bead)" stroke="#2a1a10" strokeWidth=".6" /></svg></TreeRow>
              </TreeCol>
            </Tree>
          </Panel>
          <Panel $h={152} $gap={5}>
            <PanelHead $h={24}>
              <Cell $w={21.5}><Grip $w={15} $h={14} /></Cell>
              <Cell $w={158}>Position</Cell><Cell $w={159}>Size</Cell><Cell $w={60}>Rotation</Cell>
            </PanelHead>
            <CoordRows>
              {[["X", "H"], ["Y", "P"], ["Z", "B"]].map(([a, r]) => (
                <CoordRow key={a}>
                  <Cell $w={14}>{a}</Cell><Field $w={147}>0 cm<Spin /></Field><Spacer $w={4} />
                  <Cell $w={13.5}>{a}</Cell><Field $w={147}>0 cm<Spin /></Field><Spacer $w={4} />
                  <Cell $w={15.5}>{r}</Cell><Field $w={80}>0 °</Field>
                </CoordRow>
              ))}
              <CoordRow $down>
                <Spacer $w={14} /><Dropdown $w={147}>Object (Rel)<Caret c="#c0c0c0" /></Dropdown><Spacer $w={17.5} />
                <Dropdown $w={147} $dim>Size<Caret c="#606060" /></Dropdown><Spacer $w={19.5} /><Pill $w={90} $h={18} />
              </CoordRow>
            </CoordRows>
          </Panel>
          <Panel $h={490}>
            <PanelHead $h={27}>
              <Cell $w={25}><Grip $w={15} $h={14} /></Cell>
              <Cell $w={51}>Mode</Cell><Cell $w={41}>Edit</Cell><Cell $w={179} $ls={0.15}>User Data</Cell>
              <svg width="88" height="22" viewBox="0 0 88 22">
                <path d="M0 10L18 3L14 10L18 17Z" fill="#1b1b1b" /><path d="M20 12L24 7L30 9M21 17L40 9" fill="none" stroke="#444" strokeWidth="1.400" />
                <path d="M60 2L68 19L60 15L52 19Z" fill="#1b1b1b" /><circle cx="91" cy="7" r="5" fill="none" stroke="#1b1b1b" strokeWidth="2" />
              </svg>
            </PanelHead>
            <ObjectTitle><Cell $w={26.5}><HalfBall w={18} h={20} /></Cell>Symmetry Object [Symmetry]</ObjectTitle>
            <Tabs><Tab>Basic</Tab><Tab>Coord.</Tab><Tab $on>Object</Tab></Tabs>
            <SectionTitle>Object Properties</SectionTitle>
            <PropRow $h={26}><Radio /><Cell $w={83}>Mirror Plane</Cell><Dropdown $w={300}>ZY</Dropdown></PropRow>
            <PropRow $h={18}><Radio /><Cell $w={82}>Weld Points</Cell><Tick /></PropRow>
            <PropRow $h={29}><Radio /><Cell $w={67} $ls={0.5}>Tolerance</Cell><Cell $w={16} $ls={3}>..</Cell><Field $w={86}>0.01 cm<Spin /></Field></PropRow>
            <PropRow $h={18}><Radio /><Cell $w={82}>Symmetrical</Cell><Tick /></PropRow>
            <Fold><svg width="11" height="8"><path d="M1 2H9L5 6.500Z" fill="#c4c4c4" /></svg>Modeling</Fold>
            <FoldBody>
              <PropRow $h={22} $indent><Cell $w={137}>Clamp Points on Axis</Cell><Cell $w={18} $ls={3}>..</Cell><Tick /></PropRow>
              <PropRow $h={22} $indent><Cell $w={155}>Delete Polygons on Axis</Cell><Tick /></PropRow>
              <PropRow $h={22} $indent><Cell $w={115}>Automatically Flip</Cell><Cell $w={40} $ls={3}>.....</Cell><Tick on={false} /></PropRow>
              <PropRow $h={22}><Spacer $w={22} /><Pill $w={48} $h={18}>Flip</Pill></PropRow>
            </FoldBody>
          </Panel>
        </RightSide>
      </Body>
      <CornerMark />
      <Subtitle>你看这个球也是处于世界中心点的</Subtitle>
    </Shell>
  );
}
